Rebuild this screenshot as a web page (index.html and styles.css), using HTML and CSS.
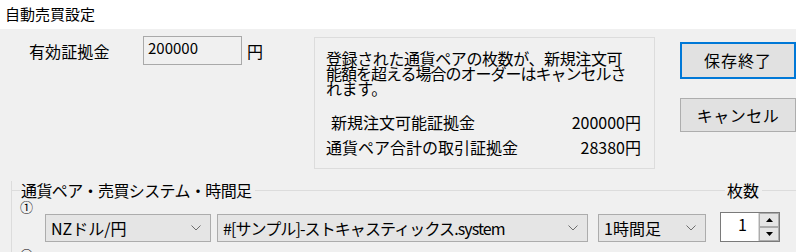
FILE: index.html
```html
<!DOCTYPE html>
<html lang="ja">
<head>
<meta charset="utf-8">
<title>自動売買設定</title>
<link rel="stylesheet" href="styles.css">
</head>
<body>
<div class="titlebar">自動売買設定</div>
<div class="main">
  <div class="top">
    <div class="left">
      <span class="label">有効証拠金</span>
      <div class="textbox">200000</div>
      <span class="yen">円</span>
    </div>
    <div class="info">
      <p class="msg">登録された通貨ペアの枚数が、新規注文可<br><span class="tight">能額を超える場合のオーダーはキャンセルさ</span><br>れます。</p>
      <div class="row row-a"><span>新規注文可能証拠金</span><span>200000円</span></div>
      <div class="row"><span>通貨ペア合計の取引証拠金</span><span>28380円</span></div>
    </div>
    <div class="buttons">
      <div class="btn btn-default">保存終了</div>
      <div class="btn">キャンセル</div>
    </div>
  </div>
  <div class="group">
    <div class="group-head">
      <span class="seg-start"></span>
      <span class="legend">通貨ペア・売買システム・時間足</span>
      <span class="seg-fill"></span>
      <span class="legend legend-qty">枚数</span>
      <span class="seg-end"></span>
    </div>
    <div class="num">①</div>
    <div class="combos">
      <div class="combo c1"><span>NZドル/円</span><svg class="chev" viewBox="0 0 10 6" width="10" height="6"><polyline points="0.5,0.5 5,5 9.5,0.5" fill="none" stroke="#6d6d6d" stroke-width="1"/></svg></div>
      <div class="combo c2"><span>#[サンプル]-ストキャスティックス.system</span><svg class="chev" viewBox="0 0 10 6" width="10" height="6"><polyline points="0.5,0.5 5,5 9.5,0.5" fill="none" stroke="#6d6d6d" stroke-width="1"/></svg></div>
      <div class="combo c3"><span>1時間足</span><svg class="chev" viewBox="0 0 10 6" width="10" height="6"><polyline points="0.5,0.5 5,5 9.5,0.5" fill="none" stroke="#6d6d6d" stroke-width="1"/></svg></div>
      <div class="spinner">
        <span class="spin-val">1</span>
        <div class="spin-btns">
          <div class="spin-btn"><svg viewBox="0 0 7 4" width="7" height="4"><polygon points="0,4 3.5,0 7,4" fill="#000"/></svg></div>
          <div class="spin-btn"><svg viewBox="0 0 7 4" width="7" height="4"><polygon points="0,0 7,0 3.5,4" fill="#000"/></svg></div>
        </div>
      </div>
    </div>
    <div class="num num2">②</div>
  </div>
</div>
</body>
</html>
```

FILE: styles.css
```css
* { box-sizing: border-box; }
html, body {
  margin: 0;
  padding: 0;
  width: 796px;
  height: 252px;
  overflow: hidden;
  font-family: "Noto Sans CJK JP", "Noto Sans", sans-serif;
  color: #000;
}
.titlebar {
  height: 29px;
  background: #fff;
  font-size: 15px;
  line-height: 28px;
  padding-left: 5px;
}
.main {
  background: #f0f0f0;
  height: 223px;
  overflow: hidden;
}
.top {
  display: flex;
  height: 152px;
}
.left {
  width: 315px;
  display: flex;
  align-items: flex-start;
  padding-top: 7px;
  font-size: 16px;
}
.label {
  margin-left: 29px;
  width: 114px;
  line-height: 31px;
  letter-spacing: 0.1px;
}
.textbox {
  width: 99px;
  height: 29px;
  border: 1px solid #a9a9a9;
  background: #f0f0f0;
  font-size: 15px;
  line-height: 20px;
  padding-left: 4px;
  padding-top: 1px;
}
.yen {
  margin-left: 5px;
  line-height: 31px;
}
.info {
  margin-top: 8px;
  width: 342px;
  height: 132px;
  border: 1px solid #dcdcdc;
  padding: 13px 13px 0 11px;
  font-size: 16px;
}
.msg {
  margin: 0;
  line-height: 15px;
  letter-spacing: -0.4px;
  white-space: nowrap;
}
.tight {
  letter-spacing: -1px;
}
.row {
  display: flex;
  justify-content: space-between;
  line-height: 25px;
  height: 25px;
}
.row-a {
  margin-top: 14px;
  padding-left: 5px;
}
.buttons {
  margin-left: 25px;
  padding-top: 13px;
  display: flex;
  flex-direction: column;
  gap: 19px;
}
.btn {
  width: 116px;
  height: 34px;
  border: 1px solid #adadad;
  background: #e1e1e1;
  font-size: 16px;
  line-height: 32px;
  text-align: center;
  letter-spacing: 0.5px;
}
.btn-default {
  height: 37px;
  border: 2px solid #0078d7;
  line-height: 33px;
  letter-spacing: 1px;
}
.group {
  margin-left: 11px;
  border-left: 1px solid #dcdcdc;
  font-size: 16px;
}
.group-head {
  display: flex;
  align-items: center;
  height: 18px;
  margin-left: -1px;
}
.seg-start { width: 9px; border-top: 1px solid #dcdcdc; }
.seg-fill { flex: 1; border-top: 1px solid #dcdcdc; margin-left: 2px; }
.seg-end { flex: 0 0 34px; border-top: 1px solid #dcdcdc; }
.legend {
  line-height: 18px;
  padding: 0 1px;
  letter-spacing: -0.6px;
}
.legend-qty {
  padding: 0 3px 0 2px;
  letter-spacing: 0;
}
.num {
  padding-left: 8px;
  margin-top: 1px;
  line-height: 13px;
  height: 13px;
  font-size: 13px;
}
.num2 {
  margin-top: 5px;
}
.combos {
  display: flex;
  align-items: center;
  padding-left: 33px;
  height: 30px;
}
.combo {
  height: 28px;
  border: 1px solid #acacac;
  background: #e5e5e5;
  display: flex;
  align-items: center;
  justify-content: space-between;
  padding: 0 9px 0 5px;
  font-size: 16px;
  line-height: 26px;
  white-space: nowrap;
}
.c1 { width: 166px; }
.c2 { width: 371px; margin-left: 6px; letter-spacing: -0.9px; }
.c3 { width: 108px; margin-left: 10px; }
.spinner {
  margin-left: 14px;
  width: 60px;
  height: 30px;
  border: 1px solid #7a7a7a;
  background: #fff;
  display: flex;
  align-items: flex-start;
  margin-top: -2px;
}
.spin-val {
  flex: 1;
  text-align: right;
  padding-right: 11px;
  line-height: 22px;
}
.spin-btns {
  width: 21px;
  height: 100%;
  display: flex;
  flex-direction: column;
  border-left: 1px solid #d9d9d9;
}
.spin-btn {
  flex: 1;
  background: #e5e5e5;
  border: 1px solid #acacac;
  display: flex;
  align-items: center;
  justify-content: center;
}
```
